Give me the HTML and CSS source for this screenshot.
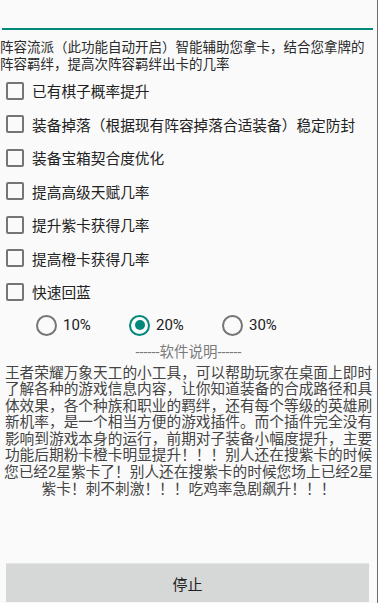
FILE: index.html
```html
<!DOCTYPE html>
<html lang="zh-CN">
<head>
    <meta charset="UTF-8">
    <meta name="viewport" content="width=device-width, initial-scale=1.0">
    <title>辅助</title>
    <link rel="stylesheet" href="styles.css">
</head>
<body>
    <div class="screen">
        <div class="edit-field"></div>
        <div class="intro">阵容流派（此功能自动开启）智能辅助您拿卡，结合您拿牌的<br>阵容羁绊，提高次阵容羁绊出卡的几率</div>

        <div class="options">
            <label class="option"><input type="checkbox"><span>已有棋子概率提升</span></label>
            <label class="option"><input type="checkbox"><span>装备掉落（根据现有阵容掉落合适装备）稳定防封</span></label>
            <label class="option"><input type="checkbox"><span>装备宝箱契合度优化</span></label>
            <label class="option"><input type="checkbox"><span>提高高级天赋几率</span></label>
            <label class="option"><input type="checkbox"><span>提升紫卡获得几率</span></label>
            <label class="option"><input type="checkbox"><span>提高橙卡获得几率</span></label>
            <label class="option"><input type="checkbox"><span>快速回蓝</span></label>
        </div>

        <div class="rate-group">
            <label class="rate"><input type="radio" name="rate"><span>10%</span></label>
            <label class="rate"><input type="radio" name="rate" checked><span>20%</span></label>
            <label class="rate"><input type="radio" name="rate"><span>30%</span></label>
        </div>

        <div class="about-title">------软件说明------</div>
        <div class="about-text">王者荣耀万象天工的小工具，可以帮助玩家在桌面上即时<br>了解各种的游戏信息内容，让你知道装备的合成路径和具<br>体效果，各个种族和职业的羁绊，还有每个等级的英雄刷<br>新机率，是一个相当方便的游戏插件。而个插件完全没有<br>影响到游戏本身的运行，前期对子装备小幅度提升，主要<br>功能后期粉卡橙卡明显提升！！！别人还在搜紫卡的时候<br>您已经2星紫卡了！别人还在搜紫卡的时候您场上已经2星<br>紫卡！刺不刺激！！！吃鸡率急剧飙升！！！</div>

        <button class="stop-button">停止</button>
    </div>
</body>
</html>
```

FILE: styles.css
```css
body {
    margin: 0;
    padding: 0;
    background-color: #fafafa;
    font-family: Roboto, "Noto Sans CJK SC", sans-serif;
    color: #212121;
}
.screen {
    width: 377px;
    height: 603px;
    border-right: 1px solid #6e6e6e;
    display: flex;
    flex-direction: column;
    overflow: hidden;
}
.edit-field {
    height: 28px;
    margin: 0 4px 0 2px;
    border-bottom: 2px solid #00897b;
}
.intro {
    margin-top: 9px;
    font-size: 13.5px;
    line-height: 17px;
    color: #2a2a2a;
    white-space: nowrap;
}
.options {
    margin-top: 1px;
}
.option {
    display: flex;
    align-items: center;
    height: 33.5px;
    padding-left: 6px;
    font-size: 14.7px;
}
.option input {
    appearance: none;
    width: 18px;
    height: 18px;
    margin: 0 8px 0 0;
    border: 2px solid #757575;
    border-radius: 2px;
    box-sizing: border-box;
    background: none;
}
.rate-group {
    display: flex;
    height: 33px;
    padding-left: 36px;
}
.rate {
    display: flex;
    align-items: center;
    width: 93px;
    font-size: 15px;
}
.rate input {
    appearance: none;
    width: 21px;
    height: 21px;
    margin: 0 6px 0 0;
    border: 2px solid #757575;
    border-radius: 50%;
    box-sizing: border-box;
    display: flex;
    align-items: center;
    justify-content: center;
}
.rate input:checked {
    border-color: #00897b;
}
.rate input:checked::after {
    content: "";
    width: 10px;
    height: 10px;
    border-radius: 50%;
    background-color: #00897b;
}
.about-title {
    margin-top: 2px;
    text-align: center;
    font-size: 14.5px;
    line-height: 18px;
    color: #7a7a7a;
}
.about-text {
    margin-top: 3px;
    text-align: center;
    font-size: 14.7px;
    line-height: 16.6px;
    color: #444;
    white-space: nowrap;
}
.stop-button {
    margin: auto 8px 1px 6px;
    height: 39px;
    border: none;
    border-top: 1px solid #e4e5e5;
    background-color: #d6d7d7;
    font-family: Roboto, "Noto Sans CJK SC", sans-serif;
    font-size: 15px;
    color: #222;
}
```
